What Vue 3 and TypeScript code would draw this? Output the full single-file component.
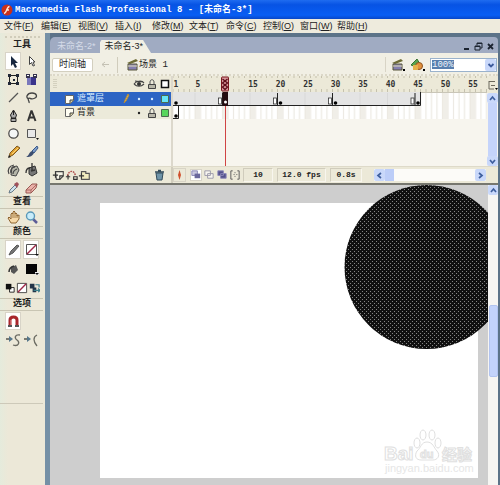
<script setup lang="ts">
import { ref } from 'vue'

interface Icon { name: string; art: string; on?: boolean }

const menus: [string, string][] = [
  ['文件', 'F'], ['编辑', 'E'], ['视图', 'V'], ['插入', 'I'], ['修改', 'M'],
  ['文本', 'T'], ['命令', 'C'], ['控制', 'O'], ['窗口', 'W'], ['帮助', 'H'],
]

const tools: Icon[] = [
  { name: '选择', on: true, art: '<path d="M5 2v10l2-2 2 4 2-1-2-4h3z" fill="#182840"/>' },
  { name: '部分选取', art: '<path d="M5.500 2.500v8l2-2 1.500 3.500 1.500-.5-1.500-3.500h2z" fill="#fff" stroke="#444"/>' },
  { name: '任意变形', art: '<path d="M3.500 3.500h8v8h-8z" fill="none" stroke="#222"/><path d="M2 2h3v3H2zM10 2h3v3h-3zM2 10h3v3H2zM10 10h3v3h-3zM7 7h2v2H7z" fill="#202838"/>' },
  { name: '填充变形', art: '<path d="M3 5h9v8H3z" fill="#3a348c"/><path d="M3 5h4v8H3z" fill="#7a78bc"/><path d="M2 2h4v4H2zM9 2h4v4H9z" fill="#35334e"/><path d="M3 3h2v1H3zM10 3h2v1h-2z" fill="#fff"/>' },
  { name: '线条', art: '<path d="M3 12l9-9" stroke="#555" stroke-width="1.200"/>' },
  { name: '套索', art: '<path d="M5 9C1 8 3 3 8 3s6 4 2 5.500S6 7 4.500 8.500 6 11 5 13" fill="none" stroke="#444" stroke-width="1.300"/>' },
  { name: '钢笔', art: '<path d="M7.500 2L4.500 7l1 3h4l1-3zM5 10.500h5v3H5z" fill="#aaa" stroke="#222"/><path d="M7.500 3v4" stroke="#222"/>' },
  { name: '文本', art: '<path d="M7.500 2.500L4 13M7.500 2.500L11.500 13M5 9.500h5" stroke="#333" stroke-width="2" fill="none"/>' },
  { name: '椭圆', art: '<circle cx="7.500" cy="7.500" r="4.700" fill="#f4f6f6" stroke="#444" stroke-width="1.200"/>' },
  { name: '矩形', art: '<path d="M3.500 3.500h8v8h-8z" fill="#e8e8e8" stroke="#555"/><path d="M12 12h3l-1.500 2z" fill="#111"/>' },
  { name: '铅笔', art: '<path d="M3 13l1-4 7-7 3 2-7 7z" fill="#e0a030" stroke="#7c5a24"/><path d="M6 10l6-6" stroke="#fbd678"/><path d="M2 14l1-3 2 2z" fill="#222"/>' },
  { name: '刷子', art: '<path d="M8 7l5-5 1 2-4 5z" fill="#7e9cc8" stroke="#385888"/><path d="M8 7l2 2c-2 4-5 4-8 4 3-1 3-5 6-6z" fill="#3d4e70"/>' },
  { name: '墨水瓶', art: '<path d="M6 5l5-1 2 4-3 6-5-1z" fill="#b5b5a8" stroke="#444"/><path d="M3 12C1 8 3 4 8 3M5 11c-1-3 0-5 4-6M7 12c0-3 1-4 4-5" fill="none" stroke="#444" stroke-width="1.200"/>' },
  { name: '颜料桶', art: '<path d="M5 6l6-2 2 7-5 3-3-2z" fill="#777" stroke="#333"/><path d="M8 1v7M2 11c0-3 1-5 4-5M7 9l4-1" fill="none" stroke="#333" stroke-width="1.300"/>' },
  { name: '滴管', art: '<path d="M3 13l1-3 5-5 2 2-5 5z" fill="#cfe2ec" stroke="#667a88"/><path d="M8 4l3-2 2 2-2 4z" fill="#a0525a"/>' },
  { name: '橡皮擦', art: '<path d="M2 10l6-6h5l-1 4-5 5H2z" fill="#eab0a8" stroke="#9a5a54"/><path d="M2 10h5l6-6M7 10v3" fill="none" stroke="#9a5a54" stroke-width=".8"/>' },
]

const viewTools: Icon[] = [
  { name: '手形', art: '<path d="M5 13L2 8l1-1 2 2V4l1-1 1 1V2l1-1 1 1v2l1-1 1 1v2l2-1v4l-3 4z" fill="#f6d9a8" stroke="#8d6430"/><path d="M7 4v4M9 4v4M11 5v3" stroke="#8d6430" stroke-width=".8"/>' },
  { name: '缩放', art: '<path d="M9 9l4 4" stroke="#5c5c98" stroke-width="2.500"/><circle cx="6.500" cy="6" r="4" fill="#c8ecfa" stroke="#5a98b8" stroke-width="1.400"/>' },
]

const colourTools: Icon[] = [
  { name: '笔触颜色', on: true, art: '<path d="M3 13l2-4 6-6 2 1-6 7z" fill="#777" stroke="#555"/>' },
  { name: '笔触色样', on: true, art: '<path d="M2.500 2.500h10v10h-10z" fill="#fff" stroke="#555"/><path d="M3 12l9-9" stroke="#a02848" stroke-width="1.500"/><path d="M11 12h4l-2 2z" fill="#111"/>' },
  { name: '填充颜色', art: '<path d="M5 7l5-3 2 5-4 4-3-2z" fill="#555"/><path d="M3 11c0-4 2-5 5-6" fill="none" stroke="#333" stroke-width="1.500"/>' },
  { name: '填充色样', art: '<path d="M2 3h11v10H2z" fill="#050505"/><path d="M11 11h4v3h-4z" fill="#eee"/><path d="M11 12h4l-2 2z" fill="#111"/>' },
]

const swatchTools: Icon[] = [
  { name: '黑白', art: '<path d="M7 7h5v5H7z" fill="#fff" stroke="#222"/><path d="M3 3h6v6H3z" fill="#111"/>' },
  { name: '没有颜色', art: '<path d="M2.500 2.500h10v10h-10z" fill="#fff" stroke="#444"/><path d="M3 12l9-9" stroke="#a02848" stroke-width="1.500"/>' },
  { name: '交换颜色', art: '<path d="M3 3h5v5H3zM6 7h4v5H6z" fill="#233548"/><path d="M9 4h4v3M7 10h7l-2-2M12 12l2-2" fill="none" stroke="#3d7f8c" stroke-width="1.300"/>' },
]

const optionTools: Icon[] = [
  { name: '平滑', art: '<path d="M0 6h5" stroke="#56564e" stroke-width="1.500"/><path d="M3 3l4 3-4 3z" fill="#56768a"/><path d="M14 2C9 1 8 5 11 7s2 7-4 5" fill="none" stroke="#6b6b62" stroke-width="1.300"/>' },
  { name: '伸直', art: '<path d="M0 6h5" stroke="#56564e" stroke-width="1.500"/><path d="M3 3l4 3-4 3z" fill="#56768a"/><path d="M13 2C9 4 9 8 13 13" fill="none" stroke="#6b6b62" stroke-width="1.300"/>' },
]

const onionTools: Icon[] = [
  { name: '绘图纸外观', on: true, art: '<path d="M3 3h6v5H3z" fill="#cac8e0" stroke="#8884b4"/><path d="M6 6h6v5H6z" fill="#6a679c"/>' },
  { name: '绘图纸外观轮廓', art: '<path d="M3 3h6v5H3zM6 6h6v5H6z" fill="#f8f6f0" stroke="#9a98a8"/>' },
  { name: '编辑多个帧', art: '<path d="M3 3h6v5H3zM6 6h6v5H6z" fill="#55528c" stroke="#8c88b8"/>' },
  { name: '修改绘图纸标记', art: '<path d="M5 3H3v9h2M10 3h2v9h-2M6 7h1M9 7h1M7 5h1M7 9h1" fill="none" stroke="#555"/>' },
]

const layerTools: Icon[] = [
  { name: '插入图层', art: '<path d="M4 3h9v5l-4 4H5z" fill="#f6f4e8" stroke="#444" stroke-width="1.300"/><path d="M1 7h6M4 4v6M9 12V8h4" stroke="#333" stroke-width="1.300" fill="none"/>' },
  { name: '添加运动引导层', art: '<path d="M3 8c1-7 8-7 9 0" fill="none" stroke="#b05050" stroke-dasharray="2 1" stroke-width="1.700"/><path d="M1 9h5M3.500 7v5M10 9h4v3h-4z" stroke="#333" stroke-width="1.300" fill="none"/>' },
  { name: '插入图层文件夹', art: '<path d="M4 5V3h5v2h4v7H4z" fill="#f1ecc0" stroke="#555" stroke-width="1.300"/><path d="M1 8h6M4 5v6" stroke="#333" stroke-width="1.300"/>' },
]

const layers = [
  { name: '遮罩层', active: true, locked: false, colour: '#66e4f6' },
  { name: '背景', active: false, locked: true, colour: '#58d65c' },
]

const clapper = '<path d="M2 6l9-4 2 2-8 3z" fill="#6d6b35"/><path d="M3 7h9v6H3z" fill="#8580b0" stroke="#59573a"/><path d="M3 9h9" stroke="#e2dfb8"/>'

const frameWidth = 5.5
const frameX = (n: number) => (n - 1) * frameWidth
const marks = [1, 5, 15, 20, 25, 30, 35, 40, 45, 50, 55]
const ticks = Array.from({ length: 300 }, (_, i) => i + 1)
const fives = Array.from({ length: 60 }, (_, i) => (i + 1) * 5)
const keyframes = [10, 20, 30, 45]
const current = 10
const zoom = ref('100%')
</script>

<template>
  <div class="app">
    <header class="title">
      <svg width="12" height="12" viewBox="0 0 12 12"><circle cx="6" cy="6" r="5.500" fill="#c9301c" /><path d="M8.500 2.500C5.500 2.500 6 9 3 9.500M5 6h3" fill="none" stroke="#ffe6d8" stroke-width="1.500" /></svg>
      <span>Macromedia Flash Professional 8 - [未命名-3*]</span>
    </header>
    <nav class="menu">
      <a v-for="m in menus" :key="m[1]" href="#">{{ m[0] }}<span class="key">(<u>{{ m[1] }}</u>)</span></a>
    </nav>

    <div class="body">
      <aside class="tools">
        <div class="grip"></div>
        <h2 class="first">工具</h2>
        <div class="grid main">
          <button v-for="t in tools" :key="t.name" :class="{ on: t.on }" :aria-label="t.name"><svg width="15" height="15" viewBox="0 0 15 15" v-html="t.art" /></button>
        </div>
        <h2>查看</h2>
        <div class="grid view">
          <button v-for="t in viewTools" :key="t.name" :aria-label="t.name"><svg width="15" height="15" viewBox="0 0 15 15" v-html="t.art" /></button>
        </div>
        <h2>颜色</h2>
        <div class="grid colour">
          <button v-for="t in colourTools" :key="t.name" :class="{ on: t.on }" :aria-label="t.name"><svg width="15" height="15" viewBox="0 0 15 15" v-html="t.art" /></button>
        </div>
        <div class="swatches">
          <button v-for="t in swatchTools" :key="t.name" :aria-label="t.name"><svg width="12" height="12" viewBox="1 1 13 13" v-html="t.art" /></button>
        </div>
        <h2>选项</h2>
        <div class="grid options">
          <button class="on" aria-label="贴紧至对象"><svg width="15" height="15" viewBox="0 0 15 15"><path d="M4 12V6c0-4 7-4 7 0v6" fill="none" stroke="#a8262c" stroke-width="3" /><path d="M2 11h4v2H2zM9 11h4v2H9z" fill="#555" /><path d="M5 11V6" stroke="#e89090" /></svg></button>
          <span></span>
          <button v-for="t in optionTools" :key="t.name" :aria-label="t.name"><svg width="15" height="15" viewBox="0 0 15 15" v-html="t.art" /></button>
        </div>
        <div class="panel-end"></div>
      </aside>

      <main class="doc">
        <div class="tabs">
          <a href="#" class="tab">未命名-2*</a>
          <a href="#" class="tab active">未命名-3*</a>
          <div class="winbtns">
            <button aria-label="最小化"><svg width="9" height="9"><path d="M2 7h5" stroke="#1c2430" stroke-width="2" /></svg></button>
            <button aria-label="还原"><svg width="9" height="9"><path d="M3 3.500V1h5v5H6M1 4h5v4H1zM3 1.500h5M1 4.500h5" fill="none" stroke="#1c2430" /></svg></button>
            <button aria-label="关闭"><svg width="9" height="9"><path d="M2 2l5 5M7 2L2 7" stroke="#1c2430" stroke-width="1.800" /></svg></button>
          </div>
        </div>

        <div class="editbar">
          <button class="timeline-btn">时间轴</button>
          <button class="back" aria-label="返回"><svg width="9" height="9"><path d="M1 4.500h7M4 2L1 4.500 4 7" fill="none" stroke="#c4c1b4" /></svg></button>
          <span class="scene"><svg width="13" height="13" viewBox="1 1 13 13" v-html="clapper" />场景 1</span>
          <div class="right">
            <button aria-label="编辑场景"><svg width="15" height="15" viewBox="0 0 15 15"><g v-html="clapper" /><path d="M13 12h2v2h-2z" /></svg></button>
            <button aria-label="编辑元件"><svg width="15" height="15" viewBox="0 0 15 15"><path d="M1 8l6-6 3 5-4 3z" fill="#57a550" stroke="#35702f" /><circle cx="9" cy="9" r="3.500" fill="#e2913c" stroke="#8f5420" /><path d="M3 8h5v5H3z" fill="#e5b04b" /><path d="M13 12h2v2h-2z" /></svg></button>
            <div class="combo">
              <input v-model="zoom" type="text" aria-label="缩放比例" />
              <button aria-label="选择比例"><svg width="10" height="10"><path d="M2.500 4L5 6.500 7.500 4" fill="none" stroke="#3c5a9c" stroke-width="1.800" /></svg></button>
            </div>
          </div>
        </div>

        <section class="timeline">
          <div class="layers">
            <div class="layer-head">
              <svg class="handle" width="4" height="10"><path d="M1 0v10M3 0v10" stroke="#bbb7a4" stroke-dasharray="1 1" /></svg>
              <svg width="12" height="12"><path d="M1 6c2-3 8-4 10-1M1 6c3 3 7 3 10 0M2 3l8 1" fill="none" stroke="#444" stroke-width="1.200" /><circle cx="6" cy="6" r="2" fill="#333" /></svg>
              <svg width="12" height="12"><path d="M4 6V4c0-3 4-3 4 0v2" fill="none" stroke="#555" /><path d="M2.500 6.500h7v4h-7z" fill="#b8b6a8" stroke="#444" /></svg>
              <svg width="12" height="12"><path d="M2.500 2.500h7v7h-7z" fill="#fff" stroke="#111" stroke-width="1.500" /></svg>
            </div>
            <div v-for="l in layers" :key="l.name" class="layer" :class="{ active: l.active }">
              <svg width="11" height="11"><path d="M1.500 1.500h8v5l-3 3h-5z" fill="#fffef2" stroke="#666" /><path d="M6 9.500V6h3.500" fill="#d8d0a0" stroke="#444" /></svg>
              <span class="name">{{ l.name }}</span>
              <svg v-if="l.active" width="12" height="12"><path d="M4 10l1-3 3-6 1 1-3 6z" fill="#f4c453" stroke="#b08a3c" /></svg>
              <svg width="12" height="12"><circle cx="6" cy="6" r="1.200" fill="currentColor" /></svg>
              <svg v-if="l.locked" width="12" height="12"><path d="M4 6V4c0-3 4-3 4 0v2" fill="none" stroke="#555" /><path d="M2.500 6.500h7v4h-7z" fill="#b8b6a8" stroke="#444" /></svg>
              <svg v-else width="12" height="12"><circle cx="6" cy="6" r="1.200" fill="currentColor" /></svg>
              <svg width="12" height="12"><path d="M2.500 2.500h7v7h-7z" :fill="l.colour" stroke="#4c6b50" /></svg>
            </div>
          </div>

          <svg class="frames" width="100%" height="90">
            <defs>
              <pattern id="cells" :width="frameWidth * 5" height="14" patternUnits="userSpaceOnUse">
                <path d="M22 0h5.500v14H22z" fill="#f0eee8" />
                <path d="M0 0v14M5.500 0v14M11 0v14M16.500 0v14M22 0v14" stroke="#e9e6de" />
              </pattern>
            </defs>
            <rect width="100%" height="16" fill="#ece9d8" />
            <path v-for="n in ticks" :key="n" :d="`M${frameX(n)} 0v2M${frameX(n)} 13v3`" stroke="#c5c1ae" />
            <text v-for="n in marks" :key="n" :x="frameX(n) + 3" y="11" text-anchor="middle">{{ n }}</text>
            <rect y="16" width="100%" height="27" fill="#fff" />
            <rect y="16" width="100%" height="27" fill="url(#cells)" />
            <path d="M0 16.500h400" stroke="#c9c6b8" />
            <rect y="16" :width="frameX(46)" height="14" fill="#e4e4e4" />
            <path v-for="n in fives.slice(0, 9)" :key="n" :d="`M${frameX(n)} 17v12`" stroke="#d8d8d8" />
            <path :d="`M0 29.500H${frameX(46)}V16M0 42.500h5.500V30`" fill="none" stroke="#222" />
            <circle cx="3" cy="27" r="1.800" />
            <circle cx="3" cy="40" r="1.800" />
            <g v-for="n in keyframes" :key="n">
              <rect :x="frameX(n) - 4" y="22" width="3" height="6" fill="#fff" stroke="#333" stroke-width=".8" />
              <path :d="`M${frameX(n)} 17v13`" stroke="#222" />
              <circle :cx="frameX(n) + 3" cy="27" r="1.800" />
            </g>
            <rect :x="frameX(current)" y="16" width="5.500" height="14" fill="#240c10" />
            <circle :cx="frameX(current) + 3" cy="26" r="1.500" fill="#fff" />
            <rect :x="frameX(current) + 2.500" y="30" width="1" height="60" fill="#d04444" />
            <rect :x="frameX(current) - 1" y="1" width="7" height="14" rx="1" fill="#d8989c" stroke="#7c1820" />
            <path :d="`M${frameX(current)} 3l5 4-5 4 3 3M${frameX(current) + 5} 3l-5 4 5 4-3 3`" fill="none" stroke="#5c0c18" stroke-width="1.300" />
          </svg>

          <div class="side">
            <button class="opts" aria-label="帧视图"><svg width="10" height="12"><path d="M1 2v8h5M1 2.500h6M3 6.500h4" fill="none" stroke="#6b685c" /><path d="M7 9h3l-1.500 2z" /></svg></button>
            <button class="arrow" aria-label="向上滚动"><svg width="9" height="9"><path d="M2 6l2.500-3L7 6" fill="none" stroke="#3f5f9e" stroke-width="1.700" /></svg></button>
            <div class="thumb"></div>
            <button class="arrow" aria-label="向下滚动"><svg width="9" height="9"><path d="M2 3l2.500 3L7 3" fill="none" stroke="#3f5f9e" stroke-width="1.700" /></svg></button>
          </div>
        </section>

        <div class="status">
          <div class="layer-tools">
            <button v-for="t in layerTools" :key="t.name" :aria-label="t.name"><svg width="13" height="13" viewBox="0 0 15 15" v-html="t.art" /></button>
            <button class="trash" aria-label="删除图层"><svg width="11" height="12"><path d="M2 4h7l-1 7H3z" fill="#6f94a8" stroke="#334c5c" /><path d="M1 3h9M4 1.500h3" stroke="#334c5c" stroke-width="1.300" /></svg></button>
          </div>
          <div class="frame-tools">
            <button class="center" aria-label="帧居中"><svg width="11" height="12"><path d="M5.500 1L7 6l-1.500 5L4 6z" fill="#d0502c" /></svg></button>
            <button v-for="t in onionTools" :key="t.name" :class="{ on: t.on }" :aria-label="t.name"><svg width="12" height="12" viewBox="1 1 13 13" v-html="t.art" /></button>
          </div>
          <output class="box num">10</output>
          <output class="box fps">12.0 fps</output>
          <output class="box sec">0.8s</output>
          <div class="hscroll">
            <button class="arrow" aria-label="向左滚动"><svg width="9" height="9"><path d="M6 2L3 4.500 6 7" fill="none" stroke="#3f5f9e" stroke-width="1.700" /></svg></button>
            <div class="thumb"></div>
            <button class="arrow end" aria-label="向右滚动"><svg width="9" height="9"><path d="M3 2l3 2.500L3 7" fill="none" stroke="#3f5f9e" stroke-width="1.700" /></svg></button>
          </div>
        </div>

        <section class="work">
          <div class="pasteboard">
            <div class="canvas">
              <svg class="mark" width="92" height="48" viewBox="0 0 92 48">
                <g fill="#fff" stroke="#e0e0e0">
                  <ellipse cx="34" cy="15" rx="3" ry="5" /><ellipse cx="40" cy="7" rx="3" ry="5" /><ellipse cx="49" cy="7" rx="3" ry="5" /><ellipse cx="55" cy="15" rx="3" ry="5" />
                  <path d="M44 14c6 0 7 6 10 9 4 5 0 9-4 9H38c-5 0-7-4-4-9 4-3 4-9 10-9z" />
                  <text x="1" y="32" class="logo">Bai</text>
                  <text x="37" y="30" class="du">du</text>
                  <text x="59" y="32" class="cn">经验</text>
                </g>
                <text x="2" y="44" class="url">jingyan.baidu.com</text>
              </svg>
            </div>
            <svg class="circle" width="165" height="165" viewBox="0 0 165 165">
              <defs>
                <pattern id="dots" width="4" height="4" patternUnits="userSpaceOnUse">
                  <path d="M0 0h4v4H0z" fill="#101010" />
                  <path d="M0 0h1v1H0zM2 2h1v1H2z" fill="#858585" />
                </pattern>
              </defs>
              <circle cx="82.500" cy="82" r="82" fill="url(#dots)" />
            </svg>
          </div>
          <div class="vscroll">
            <button class="arrow" aria-label="舞台向上滚动"><svg width="9" height="9"><path d="M2 6l2.500-3L7 6" fill="none" stroke="#3f5f9e" stroke-width="1.700" /></svg></button>
            <div class="gap"></div>
            <div class="thumb"></div>
            <div class="rest"></div>
          </div>
        </section>
      </main>
    </div>
  </div>
</template>

<style>
body { margin: 0; }
</style>

<style scoped>
.app {
  display: flex;
  flex-direction: column;
  min-height: 100vh;
  overflow: hidden;
  background: #ece9d8;
  color: #222;
  font: 9px/12px "Liberation Mono", "Noto Sans CJK SC", monospace;
}
.app * { box-sizing: border-box; }
svg { display: block; flex: none; }
button {
  display: flex;
  align-items: center;
  justify-content: center;
  padding: 0;
  border: 0;
  background: none;
  font: inherit;
  color: inherit;
}
a { color: inherit; text-decoration: none; }

.title {
  display: flex;
  align-items: center;
  gap: 2px;
  height: 19px;
  padding-left: 1px;
  background: linear-gradient(#1f6cf0, #0753e4 25%, #085ef4 80%, #0847c8);
  color: #fff;
  font-weight: bold;
  white-space: nowrap;
}
.menu {
  display: flex;
  align-items: center;
  height: 14px;
  padding-left: 4px;
  background: #eeebdd;
}
.menu a { width: 37px; white-space: nowrap; }
.key { font-family: "Liberation Sans", sans-serif; }

.body { display: flex; flex: 1; }
.tools {
  width: 45px;
  padding: 3px 2px 0 0;
  background: linear-gradient(90deg, #e5ebdc, #ece8d8 8px);
}
.grip { height: 3px; margin: 0 3px 0 5px; border-top: 2px dotted #d0ccba; }
h2 {
  margin: 0;
  padding-left: 1px;
  border: solid #c9c5b3;
  border-width: 1px 0;
  font-size: 9px;
  line-height: 11px;
  font-weight: bold;
  text-align: center;
}
h2.first { border: 0; line-height: 13px; }
.grid {
  display: grid;
  grid-template-columns: 16px 16px;
  column-gap: 2px;
  padding-left: 5px;
}
.main { grid-auto-rows: 1fr; height: 144px; }
.view { height: 17px; }
.colour { grid-auto-rows: 19px; padding-top: 1px; }
.options { grid-auto-rows: 18px; padding-top: 1px; row-gap: 1px; }
.on { background: #fff; box-shadow: inset 0 0 0 1px #d8d4c8; }
.swatches { display: flex; justify-content: center; height: 20px; }
.panel-end { margin-top: 54px; border-top: 1px solid #cdc9b9; }

.doc {
  display: flex;
  flex-direction: column;
  flex: 1;
  min-width: 0;
  padding: 4px 2px 0 0;
  border-left: 5px solid #7590a6;
  background: #5c7388;
}
.tabs {
  display: flex;
  align-items: flex-end;
  height: 16px;
  padding-left: 2px;
  border-top-left-radius: 5px;
  border-top-right-radius: 4px;
  background: #a0abc2;
}
.tab {
  height: 13px;
  padding: 0 4px 0 5px;
  color: #d5dbe8;
  font-family: "Liberation Sans", "Noto Sans CJK SC", sans-serif;
  white-space: nowrap;
}
.tab.active {
  padding: 0 8px 0 5px;
  background: #f1efe4;
  color: #222;
  clip-path: polygon(0 3px, 2px 0, calc(100% - 8px) 0, 100% 100%, 0 100%);
}
.winbtns { display: flex; gap: 3px; margin: 0 3px 2px auto; }

.editbar {
  display: flex;
  align-items: center;
  height: 23px;
  padding: 2px 1px 0 2px;
  border-bottom: 2px dotted #dcd8c8;
  background: #f1efe4;
}
.timeline-btn {
  width: 41px;
  height: 14px;
  border: 1px solid #d3cfbf;
  border-radius: 2px;
  background: #fff;
}
.back { width: 25px; height: 16px; border-right: 1px solid #d0ccbc; }
.scene { display: flex; align-items: center; padding-left: 8px; }
.right {
  display: flex;
  align-items: center;
  gap: 5px;
  margin-left: auto;
  padding-left: 4px;
  border-left: 1px solid #d8d4c6;
}
.combo {
  display: flex;
  align-items: center;
  justify-content: space-between;
  width: 67px;
  height: 14px;
  padding-left: 1px;
  border: 1px solid #9ab2cc;
  background: #fff;
}
.combo input {
  width: 22px;
  height: 9px;
  padding: 0;
  border: 0;
  background: #587fae;
  color: #eef4fa;
  font: 9px/9px "Liberation Mono", monospace;
}
.combo button, .arrow { background: #c9d8fa; border-radius: 2px; }
.combo button { width: 11px; height: 12px; }

.timeline { display: flex; background: #f7f5ee; }
.layers { width: 123px; border-right: 2px solid #dcd8cc; }
.layer-head, .layer { display: flex; align-items: center; gap: 1px; }
.layer-head { height: 16px; background: #ece9d8; }
.handle { margin: 0 auto 0 3px; }
.layer { height: 13px; padding-left: 14px; background: #eceada; color: #222; }
.layer.active { height: 14px; background: #2c64c4; color: #d8ecff; }
.name { flex: 1; padding-left: 1px; white-space: nowrap; }
.frames { flex: 1 1 0; min-width: 0; }
.frames text { font: bold 8px "DejaVu Sans Mono", monospace; fill: #333; }
.side { display: flex; flex-direction: column; width: 11px; }
.opts { height: 17px; background: #ece9d8; }
.arrow { height: 10px; }
.side .thumb { flex: 1; margin: 0 1px; background: #c5d4fb; }

.status {
  display: flex;
  align-items: center;
  height: 19px;
  border-top: 1px solid #dedac9;
  border-bottom: 2px solid #77776f;
  background: #ece9d8;
}
.layer-tools {
  display: flex;
  align-items: center;
  width: 123px;
  height: 100%;
  padding: 0 6px 0 2px;
  border-right: 2px solid #d1cdbd;
}
.trash { margin-left: auto; }
.frame-tools { display: flex; align-items: center; width: 70px; gap: 1px; }
.center { margin-right: 3px; border: 1px solid #d8d4c6; }
.box {
  height: 14px;
  margin-right: 4px;
  border: 1px solid;
  border-color: #d0ccbc #f8f6ee #f8f6ee #d0ccbc;
  font: bold 8px/12px "Liberation Mono", monospace;
  text-align: center;
  white-space: nowrap;
}
.num { width: 30px; }
.fps { width: 49px; }
.sec { width: 32px; }
.hscroll {
  display: flex;
  flex: 1;
  height: 12px;
  margin: 0 12px 0 8px;
  background: #fcfbf8;
}
.hscroll .arrow { width: 11px; height: 12px; }
.hscroll .thumb { width: 9px; background: #bccdf8; }
.hscroll .end { margin-left: auto; }

.work { display: flex; flex: 1; }
.pasteboard {
  position: relative;
  display: flex;
  flex: 1;
  min-width: 0;
  padding: 18px 10px 7px 50px;
  overflow: hidden;
  background: #cecece;
}
.canvas {
  display: flex;
  flex: 1;
  align-items: flex-end;
  justify-content: flex-end;
  padding: 0 3px 2px 0;
  background: #fff;
}
/* The drawn shape sits freely on the stage and spills past its edge. */
.circle { position: absolute; top: 0; right: -21px; }
.mark text { font-family: "Liberation Sans", "Noto Sans CJK SC", sans-serif; }
.mark .logo { font-size: 19px; font-weight: bold; }
.mark .du { font-size: 11px; font-weight: bold; }
.mark .cn { font-size: 15px; font-weight: bold; }
.mark .url { font-size: 11px; fill: #e6e6e6; }
.vscroll { display: flex; flex-direction: column; width: 10px; background: #f6f5f2; }
.vscroll .gap { flex: 110 1 0; }
.vscroll .thumb { flex: 71 1 0; margin-left: 1px; border: 1px solid #b2c4f0; border-radius: 2px; background: #c3d3fb; }
.vscroll .rest { flex: 108 1 0; }
</style>
